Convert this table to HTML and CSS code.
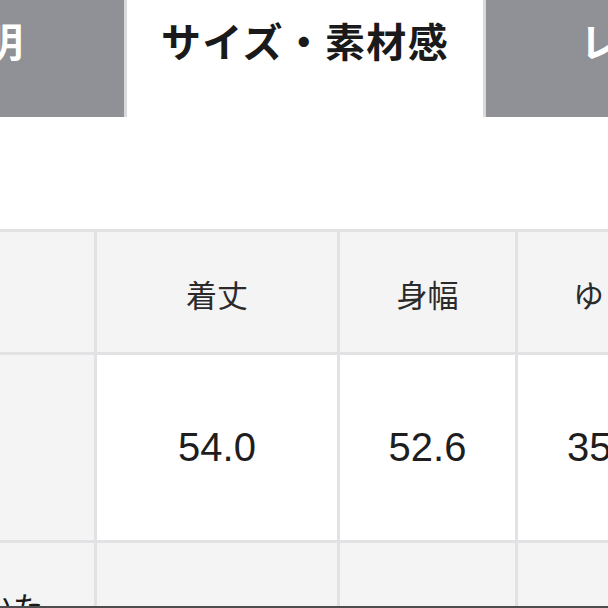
FILE: index.html
```html
<!DOCTYPE html>
<html lang="ja">
<head>
<meta charset="utf-8">
<link rel="stylesheet" href="styles.css">
</head>
<body>
<div class="page">
  <div class="tabs">
    <div class="tab tab-left"><span>商品説明</span></div>
    <div class="tab tab-active"><span>サイズ・素材感</span></div>
    <div class="tab tab-right"><span>レビュー</span></div>
  </div>
  <div class="table">
    <div class="cell head label"></div>
    <div class="cell head">着丈</div>
    <div class="cell head">身幅</div>
    <div class="cell head last"><span class="head-last">ゆき丈</span></div>

    <div class="cell label"></div>
    <div class="cell data">54.0</div>
    <div class="cell data">52.6</div>
    <div class="cell data last"><span class="data-last">35.5</span></div>

    <div class="cell label note"><span class="note-text">いた</span></div>
    <div class="cell soft"></div>
    <div class="cell soft"></div>
    <div class="cell soft last"></div>
  </div>
</div>
</body>
</html>
```
FILE: styles.css
```css
html, body {
  margin: 0;
  padding: 0;
  background: #ffffff;
}
body {
  font-family: "Noto Sans CJK JP", "Liberation Sans", sans-serif;
  overflow: hidden;
}
.page {
  width: 608px;
  height: 606px;
  overflow: hidden;
  border-bottom: 2px solid #4d4d4f;
  display: flex;
  flex-direction: column;
}
.tabs {
  display: flex;
  height: 117px;
  flex: none;
}
.tab {
  display: flex;
  align-items: center;
  overflow: hidden;
  white-space: nowrap;
  font-weight: 700;
  font-size: 40px;
  box-sizing: border-box;
  padding-bottom: 38px;
}
.tab-left {
  width: 127px;
  background: #8f9196;
  color: #ffffff;
  border-right: 3px solid #d9d9db;
  justify-content: flex-end;
  padding-right: 101px;
}
.tab-active {
  width: 356px;
  background: #ffffff;
  color: #1a1a1a;
  justify-content: center;
  height: 117px;
}
.tab-active span {
  letter-spacing: 1.3px;
}
.tab-right {
  flex: 1;
  background: #8f9196;
  color: #ffffff;
  border-left: 3px solid #d9d9db;
  padding-left: 94px;
}
.table {
  margin-top: 112px;
  display: grid;
  grid-template-columns: 94px 240px 175px 200px;
  grid-template-rows: 120px 185px 120px;
  gap: 3px;
  padding-top: 3px;
  background: #e2e2e4;
  width: 721px;
}
.cell {
  background: #ffffff;
  display: flex;
  align-items: center;
  justify-content: center;
  color: #2a2a2a;
  overflow: hidden;
  white-space: nowrap;
}
.head {
  background: #f4f4f5;
  font-size: 31px;
  font-weight: 400;
  padding-top: 2px;
}
.label {
  background: #f4f4f5;
}
.data {
  font-family: "Liberation Sans", Arial, sans-serif;
  font-size: 40px;
  color: #1e1e1e;
}
.last {
  justify-content: flex-start;
}
.head-last {
  padding-left: 55px;
}
.data-last {
  padding-left: 49px;
}
.soft {
  background: #f4f4f5;
}
.note {
  align-items: flex-start;
  justify-content: flex-start;
}
.note-text {
  margin-top: 40px;
  margin-left: -17px;
  font-size: 30px;
  color: #1a1a1a;
}
```
